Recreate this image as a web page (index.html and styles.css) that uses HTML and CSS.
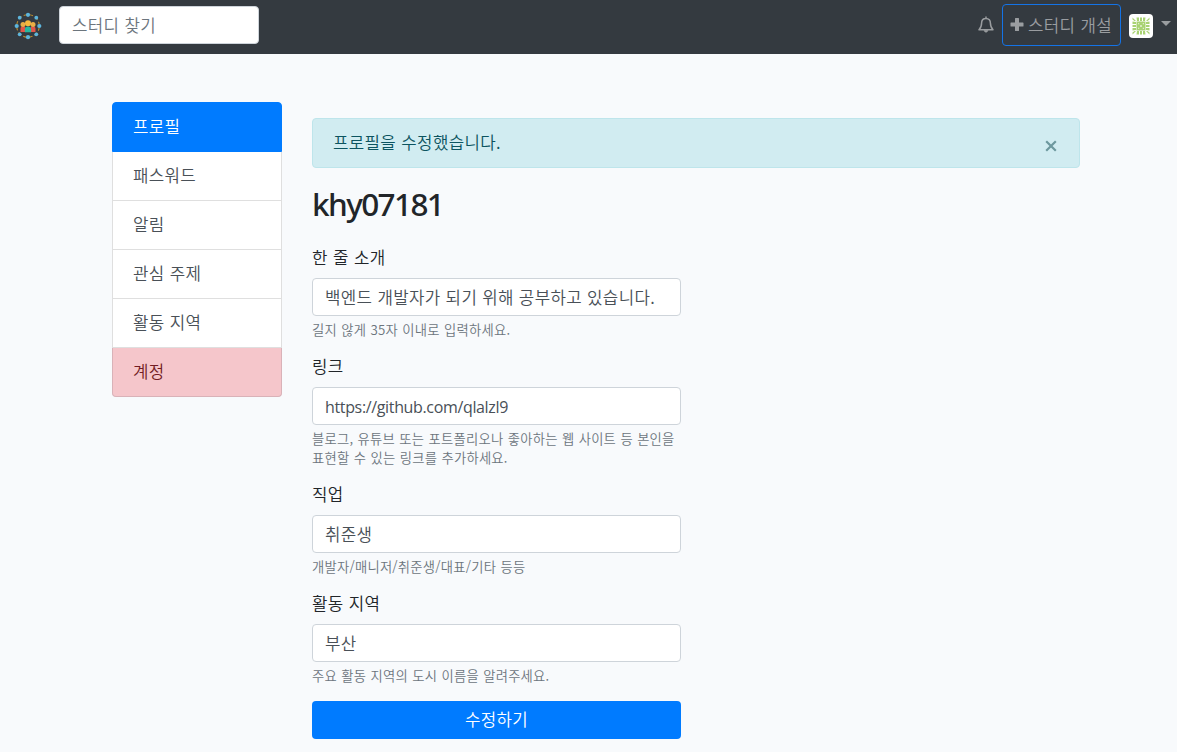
FILE: index.html
```html
<!DOCTYPE html>
<html lang="ko">
<head>
<meta charset="utf-8">
<title>프로필 수정</title>
<link rel="stylesheet" href="styles.css">
</head>
<body>
<nav class="navbar">
  <a class="brand" href="#">
    <svg width="28" height="28" viewBox="0 0 28 28">
      <circle cx="14" cy="14" r="11.3" fill="none" stroke="#b88b2d" stroke-width="1.1" stroke-dasharray="3.6 2.317" stroke-dashoffset="-1.2"/>
      <g fill="#5db5dc">
        <circle cx="14" cy="2.8" r="2.1"/><circle cx="22.3" cy="5.7" r="1.9"/><circle cx="25.3" cy="14" r="2.1"/><circle cx="22.3" cy="22.3" r="1.9"/>
        <circle cx="14" cy="25.2" r="2.1"/><circle cx="5.7" cy="22.3" r="1.9"/><circle cx="2.7" cy="14" r="2.1"/><circle cx="5.7" cy="5.7" r="1.9"/>
      </g>
      <path d="M6.500 20v-3q0-2.400 2.600-2.400t2.600 2.400v3z" fill="#e25549"/>
      <path d="M16.300 20v-3q0-2.400 2.600-2.400t2.600 2.400v3z" fill="#e25549"/>
      <circle cx="9" cy="12.400" r="2.500" fill="#e9ae45"/><circle cx="19" cy="12.400" r="2.500" fill="#e9ae45"/>
      <path d="M10.900 20.300v-3q0-2.800 3.100-2.800t3.100 2.800v3z" fill="#27b7a0"/>
      <circle cx="14" cy="11.200" r="3" fill="#f5b83d"/>
    </svg>
  </a>
  <input class="control search" type="search" placeholder="스터디 찾기">
  <div class="nav-right">
    <svg class="bell" width="16" height="18" viewBox="0 0 16 18" fill="none" stroke="#9a9da0" stroke-width="1.500" stroke-linejoin="round">
      <path d="M8 .6v1.800M8 2.400C5 2.400 3.600 4.600 3.600 7c0 3.600-.8 5-2.600 6.700h14C13.200 12 12.400 10.600 12.400 7c0-2.400-1.400-4.600-4.400-4.600z"/>
      <path d="M6.200 14.200c0 1.200.8 2 1.800 2s1.800-.8 1.800-2z" fill="#9a9da0" stroke-width=".6"/>
    </svg>
    <a class="create" href="#">
      <svg width="14" height="13" viewBox="0 0 14 13"><path d="M5.600 0h2.800q.6 0 .6.600v3.900h3.900q.6 0 .6.600v2.800q0 .6-.6.600H9v3.900q0 .6-.6.600H5.600q-.6 0-.6-.6V8.500H1.100q-.6 0-.6-.6V5.100q0-.6.6-.6H5V.6q0-.6.6-.6z" fill="#9a9da0"/></svg>
      <span>스터디 개설</span>
    </a>
    <a class="account" href="#">
      <svg class="avatar" width="24" height="24" viewBox="0 0 24 24">
        <rect width="24" height="24" rx="4" fill="#fff"/>
        <g fill="#a8d272">
          <path d="M3.500 3.500L7 7H5.500l-2-1.500zM20.500 3.500L17 7h1.500l2-1.500zM3.500 20.500L7 17H5.500l-2 1.500zM20.500 20.500L17 17h1.500l2 1.500z"/>
          <path d="M7.500 3.500H10V7H8zM11 3.500h2V7h-2zM14 3.500h2.500L16 7h-2zM8 17h2v3.500H7.500zM11 17h2v3.500h-2zM14 17h2l.5 3.500H14z"/>
          <path d="M3.500 7.500L7 8v2H3.500zM3.500 11H7v2H3.500zM3.500 14H7v2l-3.500.5zM20.500 7.500L17 8v2h3.500zM20.500 11H17v2h3.500zM20.500 14H17v2l3.500.5z"/>
          <path fill-rule="evenodd" d="M7.500 7.500h9v9h-9zM9.200 9.200v1h1v-1zM13.800 9.200v1h1v-1zM9.200 13.800v1h1v-1zM13.800 13.800v1h1v-1zM11.300 11.300v1.400h1.400v-1.400z"/>
        </g>
      </svg>
      <i class="caret"></i>
    </a>
  </div>
</nav>
<div class="page">
  <aside class="menu">
    <a class="active" href="#">프로필</a>
    <a href="#">패스워드</a>
    <a href="#">알림</a>
    <a href="#">관심 주제</a>
    <a href="#">활동 지역</a>
    <a class="danger" href="#">계정</a>
  </aside>
  <main class="content">
    <div class="alert"><span>프로필을 수정했습니다.</span>
      <svg class="close" width="12" height="12" viewBox="0 0 12 12"><path d="M1.200 1.200l9.600 9.600M10.800 1.200l-9.600 9.600" stroke="#6d989e" stroke-width="2.200"/></svg>
    </div>
    <h2>khy07181</h2>
    <form class="form">
      <div class="group">
        <label for="bio">한 줄 소개</label>
        <input class="control" id="bio" type="text" value="백엔드 개발자가 되기 위해 공부하고 있습니다.">
        <small>길지 않게 35자 이내로 입력하세요.</small>
      </div>
      <div class="group">
        <label for="url">링크</label>
        <input class="control latin" id="url" type="text" value="https://github.com/qlalzl9">
        <small>블로그, 유튜브 또는 포트폴리오나 좋아하는 웹 사이트 등 본인을<br>표현할 수 있는 링크를 추가하세요.</small>
      </div>
      <div class="group">
        <label for="job">직업</label>
        <input class="control" id="job" type="text" value="취준생">
        <small>개발자/매니저/취준생/대표/기타 등등</small>
      </div>
      <div class="group">
        <label for="area">활동 지역</label>
        <input class="control" id="area" type="text" value="부산">
        <small>주요 활동 지역의 도시 이름을 알려주세요.</small>
      </div>
      <button class="submit" type="button">수정하기</button>
    </form>
  </main>
</div>
</body>
</html>
```
FILE: styles.css
```css
* { box-sizing: border-box; }
body {
  margin: 0;
  background: #f8fafc;
  color: #212529;
  font: 350 16.800px/24px "Noto Sans CJK KR", sans-serif;
  letter-spacing: .35px;
  word-spacing: .1px;
}
a { color: inherit; text-decoration: none; }
svg { display: block; flex: none; }

.navbar {
  display: flex;
  align-items: center;
  height: 54px;
  padding: 0 6px 4px 14px;
  background: #343a40;
}
.brand { margin-right: 17px; padding-top: 2px; }
.control {
  display: block;
  width: 100%;
  height: 38px;
  padding: 6px 12px;
  border: 1px solid #ced4da;
  border-radius: 4px;
  background: #fff;
  color: #495057;
  font: inherit;
  letter-spacing: inherit;
}
.search { width: 200px; }
.search::placeholder { color: #6c757d; opacity: 1; }
.nav-right { display: flex; align-items: center; margin-left: auto; color: #9a9da0; }
.bell { margin-right: 8px; }
.create {
  display: flex;
  align-items: center;
  gap: 4px;
  width: 119px;
  height: 42px;
  padding: 0 0 1px 7px;
  border: 1px solid #1473e6;
  border-radius: 4px;
  white-space: nowrap;
}
.account { display: flex; align-items: center; gap: 8px; margin-left: 8px; }
.avatar { margin-top: 2px; }
.caret {
  border: 5px solid transparent;
  border-top-color: #9a9da0;
  border-bottom: 0;
  margin-top: -3px;
}

.page { display: flex; gap: 30px; padding: 48px 97px 0 112px; }
.menu { width: 170px; flex: none; }
.menu a {
  display: block;
  height: 49px;
  padding: 11px 20px;
  border: 1px solid #dfdfdf;
  border-top: 0;
  background: #fff;
  color: #495057;
}
.menu a.active {
  height: 50px;
  border: 1px solid #007bff;
  border-radius: 4px 4px 0 0;
  background: #007bff;
  color: #fff;
}
.menu a.danger {
  border-color: #d9b2b8;
  border-radius: 0 0 4px 4px;
  background: #f5c6cb;
  color: #721c24;
}
.content { flex: 1; padding-top: 16px; }
.alert {
  display: flex;
  justify-content: space-between;
  height: 50px;
  padding: 11px 22px 12px 20px;
  border: 1px solid #bee5eb;
  border-radius: 4px;
  background: #d1ecf1;
  color: #0c5460;
}
.close { margin-top: 10px; }
h2 {
  margin: 17px 0 0;
  color: #212529;
  font: 500 31.500px/38px "Noto Sans", sans-serif;
  letter-spacing: -1.600px;
}
.form { width: 369px; padding-top: 22px; }
.group { margin-bottom: 15px; }
.group label { display: block; margin-bottom: 9px; }
.control.latin {
  padding-top: 8px;
  font: 400 16px/24px "Open Sans", sans-serif;
  letter-spacing: -.350px;
}
small {
  display: block;
  margin-top: 4px;
  color: #6c757d;
  font-size: 13.300px;
  line-height: 19px;
  letter-spacing: .25px;
  word-spacing: .3px;
  white-space: nowrap;
}
.submit {
  width: 100%;
  height: 38px;
  margin-top: 1px;
  padding-bottom: 3px;
  border: 0;
  border-radius: 4px;
  background: #007bff;
  color: #fff;
  font: inherit;
  letter-spacing: inherit;
}
```
